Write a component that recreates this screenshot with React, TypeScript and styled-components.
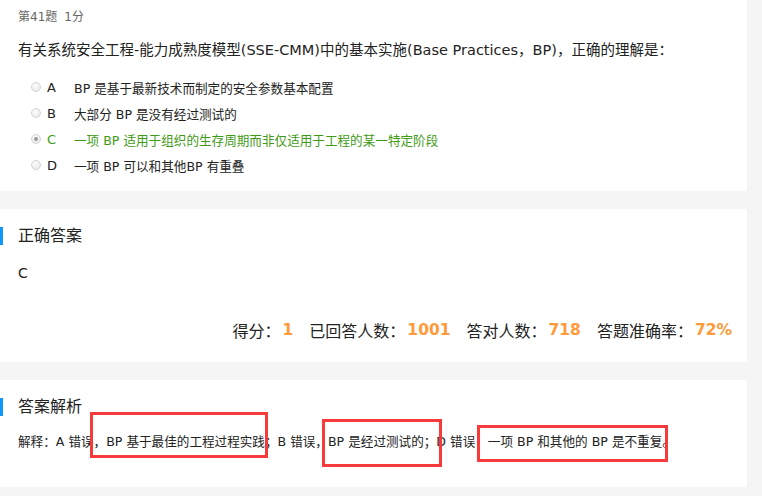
import styled, { createGlobalStyle } from "styled-components";

const GlobalStyle = createGlobalStyle`
  html, body {
    margin: 0;
    padding: 0;
    background: #f5f5f5;
  }
  body {
    font-family: "DejaVu Sans", "Noto Sans CJK SC", sans-serif;
    color: #222;
  }
`;

const Page = styled.div`
  width: 762px;
  height: 496px;
  overflow: hidden;
  display: flex;
  flex-direction: column;
  gap: 18px;
`;

const Card = styled.section<{ $top: number; $bottom: number }>`
  position: relative;
  width: 747px;
  box-sizing: border-box;
  background: #fff;
  padding: ${(p) => p.$top}px 15px ${(p) => p.$bottom}px 18px;
`;

const Meta = styled.div`
  font-size: 12px;
  line-height: 14px;
  color: #666;
  display: flex;
  gap: 7px;
`;

const Question = styled.p`
  margin: 16px 0 0;
  font-size: 14.5px;
  line-height: 20px;
  color: #222;
  white-space: nowrap;
`;

const Options = styled.ul`
  list-style: none;
  margin: 14px 0 0;
  padding: 0 0 0 13px;
`;

const Option = styled.li<{ $right?: boolean }>`
  display: flex;
  align-items: center;
  height: 26px;
  font-size: 12.6px;
  color: ${(p) => (p.$right ? "#3f9a16" : "#222")};
`;

const Radio = styled.span<{ $checked?: boolean }>`
  width: 8px;
  height: 8px;
  border-radius: 50%;
  border: 1px solid #d4d4d4;
  background: radial-gradient(circle at 40% 35%, #fdfdfd, #e4e4e4);
  display: flex;
  align-items: center;
  justify-content: center;
  margin-right: 6px;

  &::after {
    content: "";
    width: 4px;
    height: 4px;
    border-radius: 50%;
    background: ${(p) => (p.$checked ? "#9a9a9a" : "transparent")};
  }
`;

const Letter = styled.span`
  width: 27px;
  font-size: 13px;
`;

const Title = styled.h3`
  margin: 0 0 0 -18px;
  padding-left: 15px;
  border-left: 3px solid #1296fa;
  height: 18px;
  line-height: 18px;
  font-size: 16px;
  font-weight: normal;
  color: #222;
`;

const Answer = styled.div`
  margin-top: 18px;
  font-size: 14px;
  line-height: 20px;
`;

const Stats = styled.div`
  margin-top: 35px;
  display: flex;
  justify-content: flex-end;
  align-items: center;
  gap: 16px;
  height: 24px;
  font-size: 16px;
  color: #222;
`;

const Stat = styled.span`
  display: flex;
  align-items: center;
`;

const Num = styled.b`
  color: #ff9a3a;
  font-weight: bold;
  font-size: 15.5px;
  margin-left: 2px;
`;

const Explain = styled.p`
  margin: 16px 0 0;
  font-size: 12.6px;
  line-height: 20px;
  white-space: nowrap;
`;

const Mark = styled.span<{ $l: number; $t: number; $w: number; $h: number }>`
  position: absolute;
  left: ${(p) => p.$l}px;
  top: ${(p) => p.$t}px;
  width: ${(p) => p.$w}px;
  height: ${(p) => p.$h}px;
  box-sizing: border-box;
  border: 3px solid #f83a3a;
  pointer-events: none;
`;

const options = [
  { key: "A", text: "BP 是基于最新技术而制定的安全参数基本配置" },
  { key: "B", text: "大部分 BP 是没有经过测试的" },
  { key: "C", text: "一项 BP 适用于组织的生存周期而非仅适用于工程的某一特定阶段", right: true },
  { key: "D", text: "一项 BP 可以和其他BP 有重叠" },
];

const stats = [
  { label: "得分：", value: "1" },
  { label: "已回答人数：", value: "1001" },
  { label: "答对人数：", value: "718" },
  { label: "答题准确率：", value: "72%" },
];

const marks = [
  { l: 90, t: 32, w: 178, h: 46 },
  { l: 322, t: 39, w: 120, h: 48 },
  { l: 477, t: 45, w: 191, h: 37 },
];

export default function App() {
  return (
    <>
      <GlobalStyle />
      <Page>
        <Card $top={10} $bottom={13}>
          <Meta>
            <span>第41题</span>
            <span>1分</span>
          </Meta>
          <Question>
            有关系统安全工程-能力成熟度模型(SSE-CMM)中的基本实施(Base Practices，BP)，正确的理解是：
          </Question>
          <Options>
            {options.map((o) => (
              <Option key={o.key} $right={o.right}>
                <Radio $checked={o.right} />
                <Letter>{o.key}</Letter>
                <span>{o.text}</span>
              </Option>
            ))}
          </Options>
        </Card>

        <Card $top={18} $bottom={20}>
          <Title>正确答案</Title>
          <Answer>C</Answer>
          <Stats>
            {stats.map((s) => (
              <Stat key={s.label}>
                {s.label}
                <Num>{s.value}</Num>
              </Stat>
            ))}
          </Stats>
        </Card>

        <Card $top={18} $bottom={35}>
          <Title>答案解析</Title>
          <Explain>
            解释：A 错误，BP 基于最佳的工程过程实践；B 错误，BP 是经过测试的；D 错误，一项 BP 和其他的 BP 是不重复。
          </Explain>
          {marks.map((m, i) => (
            <Mark key={i} $l={m.l} $t={m.t} $w={m.w} $h={m.h} />
          ))}
        </Card>
      </Page>
    </>
  );
}
